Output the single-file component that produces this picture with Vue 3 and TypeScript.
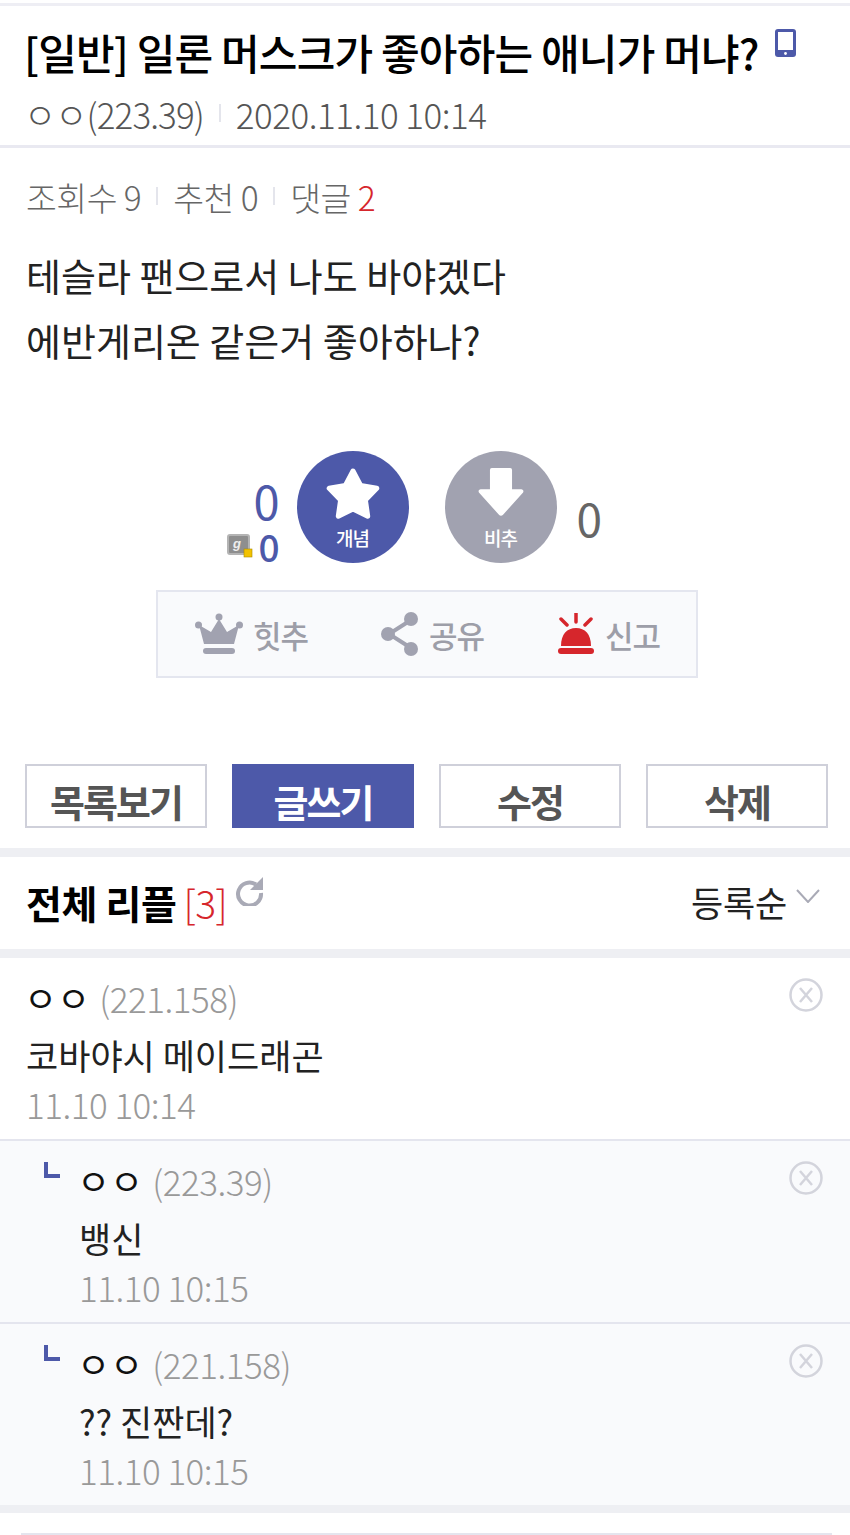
<template>
  <div class="page">
    <header class="post-head">
      <h1 class="title">
        <span>[일반] 일론 머스크가 좋아하는 애니가 머냐?</span>
        <svg class="phone" viewBox="0 0 21 28" width="21" height="28">
          <rect x="0" y="0" width="21" height="28" rx="3" fill="#4d59a9" />
          <rect x="3" y="3" width="15" height="18" fill="#fff" />
          <circle cx="10.5" cy="24.5" r="1.4" fill="#fff" />
        </svg>
      </h1>
      <div class="meta">
        <span class="writer">ㅇㅇ(223.39)</span>
        <i class="tick"></i>
        <span>2020.11.10 10:14</span>
      </div>
    </header>

    <section class="post-body">
      <div class="stats">
        <span>조회수 9</span>
        <i class="tick"></i>
        <span>추천 0</span>
        <i class="tick"></i>
        <span>댓글 <em>2</em></span>
      </div>
      <p class="text">테슬라 팬으로서 나도 바야겠다</p>
      <p class="text">에반게리온 같은거 좋아하나?</p>
    </section>

    <section class="vote">
      <div class="up-count">
        <span class="up-total">0</span>
        <span class="up-fixed">
          <svg viewBox="0 0 26 24" width="26" height="24">
            <rect x="1" y="1" width="21" height="19" rx="2" fill="#8e8e8e" stroke="#b4b4b4" stroke-width="2" />
            <text class="fix-mark" x="6" y="14" font-size="13" font-style="italic" font-weight="700" fill="#eee">g</text>
            <rect x="17" y="15" width="8" height="8" fill="#f2c200" stroke="#a98b00" stroke-width="0.6" />
          </svg>
          <b>0</b>
        </span>
      </div>
      <button class="vote-btn up" type="button">
        <svg viewBox="0 0 54 52" width="54" height="52">
          <polygon
            points="27,3 34.600,17.500 50.800,20.300 39.400,32 41.700,48.200 27,41 12.300,48.200 14.600,32 3.200,20.300 19.400,17.500"
            fill="#fff"
            stroke="#fff"
            stroke-width="5"
            stroke-linejoin="round"
          />
        </svg>
        <span>개념</span>
      </button>
      <button class="vote-btn down" type="button">
        <svg viewBox="0 0 50 54" width="46" height="50">
          <path
            d="M13 3a2 2 0 0 1 2-2h20a2 2 0 0 1 2 2v21h10c2 0 3 2 2 3.500L27 52c-1 1.200-3 1.200-4 0L1 27.500C0 26 1 24 3 24h10z"
            fill="#fff"
          />
        </svg>
        <span>비추</span>
      </button>
      <span class="down-count">0</span>
    </section>

    <div class="actions">
      <a class="action">
        <svg viewBox="0 0 48 42" width="48" height="42">
          <circle cx="24" cy="4" r="3.500" fill="#a1a2b0" />
          <circle cx="3.500" cy="12" r="3.500" fill="#a1a2b0" />
          <circle cx="44.500" cy="12" r="3.500" fill="#a1a2b0" />
          <path d="M24 6l8 13 12-7-5 19H9L4 12l12 7z" fill="#a1a2b0" />
          <rect x="8" y="35" width="32" height="6" rx="3" fill="#a1a2b0" />
        </svg>
        <span>힛추</span>
      </a>
      <a class="action">
        <svg viewBox="0 0 38 44" width="38" height="44">
          <path d="M30 8L8 22l22 14" fill="none" stroke="#a1a2b0" stroke-width="4" />
          <circle cx="30" cy="7" r="7" fill="#a1a2b0" />
          <circle cx="7" cy="22" r="7" fill="#a1a2b0" />
          <circle cx="30" cy="37" r="7" fill="#a1a2b0" />
        </svg>
        <span>공유</span>
      </a>
      <a class="action">
        <svg viewBox="0 0 38 42" width="38" height="42">
          <path d="M19 0v9M4 6l6 6M34 6l-6 6" stroke="#d6262c" stroke-width="3.500" stroke-linecap="round" />
          <path d="M4 33c0-12 6-18 15-18s15 6 15 18z" fill="#d6262c" />
          <rect x="1" y="35" width="36" height="6" rx="3" fill="#d6262c" />
        </svg>
        <span>신고</span>
      </a>
    </div>

    <nav class="buttons">
      <button class="btn" type="button">목록보기</button>
      <button class="btn primary" type="button">글쓰기</button>
      <button class="btn" type="button">수정</button>
      <button class="btn" type="button">삭제</button>
    </nav>

    <div class="band first"></div>

    <div class="reply-head">
      <div class="reply-title">
        <strong>전체 리플</strong>
        <em>[3]</em>
        <svg class="refresh" viewBox="0 0 30 30" width="30" height="30">
          <path d="M21 8.500A11.500 11.500 0 1 0 26 17" fill="none" stroke="#a9aab6" stroke-width="4" />
          <path d="M28 1v13H15z" fill="#a9aab6" />
        </svg>
      </div>
      <div class="sort">
        <span>등록순</span>
        <svg viewBox="0 0 24 14" width="24" height="14">
          <path d="M1 1l11 12L23 1" fill="none" stroke="#a9aab6" stroke-width="2" />
        </svg>
      </div>
    </div>

    <div class="band"></div>

    <ul class="comments">
      <li v-for="c in comments" :key="c.id" class="comment" :class="{ nested: c.nested }">
        <svg v-if="c.nested" class="arrow" viewBox="0 0 16 16" width="16" height="16">
          <path d="M0 0h4v12h12v4H0z" fill="#4d59a9" />
        </svg>
        <div class="who">
          <span class="nick">ㅇㅇ</span>
          <span class="ip">({{ c.ip }})</span>
        </div>
        <div class="msg">{{ c.text }}</div>
        <div class="date">{{ c.date }}</div>
        <svg class="remove" viewBox="0 0 34 34" width="34" height="34">
          <circle cx="17" cy="17" r="15.500" fill="none" stroke="#d3d4dc" stroke-width="2.500" />
          <path d="M11 10l12 14M23 10L11 24" fill="none" stroke="#d3d4dc" stroke-width="2.500" />
        </svg>
      </li>
    </ul>

    <div class="band last"></div>
    <div class="bottom-line"></div>
  </div>
</template>

<script setup lang="ts">
interface Comment {
  id: number
  ip: string
  text: string
  date: string
  nested: boolean
}

const comments: Comment[] = [
  { id: 1, ip: '221.158', text: '코바야시 메이드래곤', date: '11.10 10:14', nested: false },
  { id: 2, ip: '223.39', text: '뱅신', date: '11.10 10:15', nested: true },
  { id: 3, ip: '221.158', text: '?? 진짠데?', date: '11.10 10:15', nested: true },
]
</script>

<style>
html,
body {
  margin: 0;
  background: #fff;
}
</style>

<style scoped>
.page {
  width: 850px;
  height: 1535px;
  overflow: hidden;
  background: #fff;
  font-family: "Noto Sans CJK KR", "Noto Sans", sans-serif;
  color: #000;
}

.post-head {
  height: 139px;
  margin-top: 3px;
  padding: 0 24px;
  border-top: 3px solid #eeeef4;
  border-bottom: 3px solid #e9e9f1;
}

.title {
  display: flex;
  align-items: flex-start;
  gap: 16px;
  margin: 0;
  padding-top: 17px;
  height: 58px;
  font-size: 42px;
  line-height: 58px;
  font-weight: 500;
  letter-spacing: -0.8px;
  white-space: nowrap;
}

.phone {
  margin-top: 6px;
  flex: none;
}

.meta {
  display: flex;
  align-items: center;
  margin-top: 8px;
  height: 48px;
  font-size: 35px;
  font-weight: 300;
  letter-spacing: -0.5px;
  color: #555;
}

.writer {
  letter-spacing: -0.9px;
}

.tick {
  display: inline-block;
  width: 2px;
  height: 18px;
  margin: 0 15px;
  background: #e4e5ec;
}

.post-body {
  padding: 21px 26px 0;
}

.stats {
  display: flex;
  align-items: center;
  height: 54px;
  font-size: 33.500px;
  font-weight: 300;
  letter-spacing: -0.5px;
  color: #666;
}

.stats .tick {
  margin: 0 15px;
}

.stats em {
  font-style: normal;
  color: #d6262c;
}

.text {
  margin: 0;
  height: 65px;
  font-size: 38px;
  line-height: 65px;
  font-weight: 400;
  color: #222;
}

.stats + .text {
  margin-top: 19px;
}

.vote {
  display: flex;
  align-items: center;
  justify-content: center;
  margin-top: 79px;
  height: 112px;
  padding-right: 18px;
}

.up-count {
  display: flex;
  flex-direction: column;
  align-items: flex-end;
  width: 72px;
  margin-top: 27px;
  margin-right: 17px;
  color: #4d59a9;
}

.up-total {
  display: block;
  font-size: 47px;
  line-height: 50px;
}

.up-fixed {
  display: flex;
  align-items: center;
  gap: 5px;
  font-size: 37px;
  line-height: 42px;
}

.up-fixed b {
  font-weight: 500;
}

.fix-mark {
  font-family: "Liberation Sans", sans-serif;
}

.vote-btn {
  position: relative;
  display: flex;
  flex-direction: column;
  align-items: center;
  width: 112px;
  height: 112px;
  padding: 17px 0 0;
  border: 0;
  border-radius: 50%;
  color: #fff;
  font-family: inherit;
}

.vote-btn span {
  position: absolute;
  left: 0;
  right: 0;
  top: 74px;
  font-size: 19px;
  line-height: 26px;
  font-weight: 500;
  letter-spacing: -1px;
}

.up {
  background: #4d59a9;
}

.down {
  margin-left: 36px;
  padding-top: 16px;
  background: #a1a2b0;
}

.down-count {
  margin-left: 20px;
  margin-top: 20px;
  width: 48px;
  font-size: 46px;
  line-height: 50px;
  font-weight: 400;
  color: #666;
}

.actions {
  display: flex;
  align-items: center;
  justify-content: space-between;
  box-sizing: border-box;
  width: 542px;
  height: 88px;
  margin: 27px 0 0 156px;
  padding: 0 36px 0 37px;
  border: 2px solid #e4e6ef;
  background: #f9fafc;
}

.action {
  display: flex;
  align-items: center;
  gap: 10px;
  font-size: 31px;
  font-weight: 500;
  letter-spacing: -1px;
  color: #9d9ea8;
}

.buttons {
  display: flex;
  gap: 25px;
  margin-top: 86px;
  padding-left: 25px;
}

.btn {
  box-sizing: border-box;
  width: 182px;
  height: 64px;
  padding: 10px 0 0;
  border: 2px solid #cfd0da;
  background: #fff;
  color: #555;
  font-family: inherit;
  font-size: 38px;
  font-weight: 700;
  line-height: 48px;
  letter-spacing: -2px;
}

.primary {
  border-color: #4d59a9;
  background: #4d59a9;
  color: #fff;
}

.band {
  height: 9px;
  background: #eeeff3;
}

.band.first {
  margin-top: 20px;
}

.band.last {
  height: 8px;
}

.reply-head {
  display: flex;
  align-items: center;
  justify-content: space-between;
  box-sizing: border-box;
  height: 92px;
  padding: 0 30px 3px 26px;
}

.reply-title {
  display: flex;
  align-items: center;
  gap: 7px;
}

.reply-title strong {
  font-size: 39px;
  font-weight: 700;
  letter-spacing: -0.4px;
}

.reply-title em {
  font-style: normal;
  font-size: 39px;
  font-weight: 300;
  letter-spacing: -0.5px;
  color: #d6262c;
}

.refresh {
  margin: -22px 0 0 1px;
}

.sort {
  display: flex;
  align-items: flex-start;
  gap: 9px;
  font-size: 35px;
  letter-spacing: -0.2px;
  color: #222;
}

.sort span {
  margin-top: -1px;
}

.sort svg {
  margin-top: 12px;
}

.comments {
  margin: 0;
  padding: 0;
  list-style: none;
}

.comment {
  position: relative;
  box-sizing: border-box;
  height: 183px;
  padding: 15px 26px 0;
  border-bottom: 2px solid #e4e5ee;
}

.comment:last-child {
  height: 181px;
  border-bottom: 0;
}

.comment.nested {
  padding-left: 79px;
  background: #f9fafc;
}

.who {
  display: flex;
  align-items: center;
  gap: 9px;
  height: 48px;
  margin-left: -2px;
}

.nick {
  font-size: 36px;
  color: #111;
}

.ip,
.date {
  font-size: 35px;
  font-weight: 300;
  letter-spacing: -0.5px;
  color: #999;
}

.msg {
  margin-top: 10px;
  height: 48px;
  font-size: 35px;
  line-height: 48px;
  color: #222;
}

.date {
  margin-top: 1px;
  line-height: 48px;
}

.arrow {
  position: absolute;
  left: 44px;
  top: 21px;
}

.remove {
  position: absolute;
  right: 27px;
  top: 20px;
}

.bottom-line {
  height: 2px;
  margin: 20px 18px 0 21px;
  background: #e4e5ee;
}
</style>
